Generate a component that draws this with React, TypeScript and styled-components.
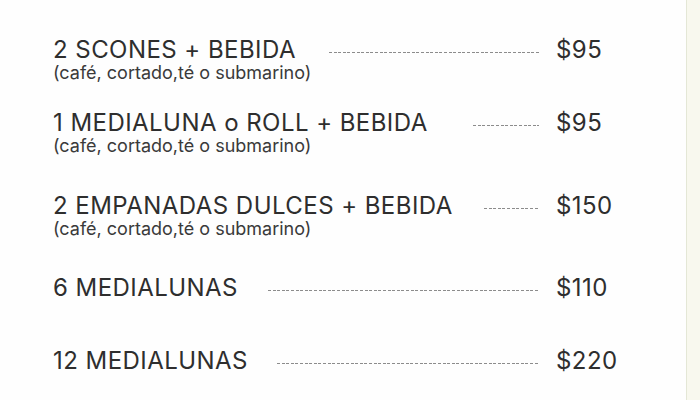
import React from "react";
import styled, { createGlobalStyle } from "styled-components";

const Global = createGlobalStyle`
  html, body { margin: 0; padding: 0; }
  body {
    background: #f8f8ee;
    font-family: Inter, "Liberation Sans", Arial, sans-serif;
    color: #2f2f2f;
  }
`;

const Page = styled.div`
  display: flex;
  height: 400px;
  overflow: hidden;
`;

const Panel = styled.main`
  width: 687px;
  background: #fefefe;
  border-right: 1px solid #e4e7d6;
  box-sizing: border-box;
  padding: 35px 50px 0 53px;
`;

const Item = styled.section<{ $gap: number }>`
  margin-top: ${(p) => p.$gap}px;
`;

const Line = styled.div`
  display: grid;
  grid-template-columns: auto 1fr 80px;
  align-items: center;
  height: 28px;
`;

const Title = styled.span`
  font-size: 24px;
  letter-spacing: 0.45px;
  font-weight: 400;
  white-space: nowrap;
  color: #2e2e2e;
`;

const Dots = styled.span<{ $l: number }>`
  height: 1px;
  margin: 6px 17px 0 ${(p) => p.$l}px;
  background-image: repeating-linear-gradient(
    to right,
    #8c8c8c 0 3px,
    transparent 3px 4.6px
  );
`;

const Price = styled.span`
  font-size: 24px;
  letter-spacing: 0.45px;
  color: #2e2e2e;
`;

const Note = styled.div`
  font-size: 18px;
  line-height: 20px;
  color: #3a3a3a;
`;

type Row = { title: string; price: string; note?: string; gap: number; dl: number };

const rows: Row[] = [
  { title: "2 SCONES + BEBIDA", price: "$95", note: "(café, cortado,té o submarino)", gap: 0, dl: 33 },
  { title: "1 MEDIALUNA o ROLL + BEBIDA", price: "$95", note: "(café, cortado,té o submarino)", gap: 25, dl: 45 },
  { title: "2 EMPANADAS DULCES + BEBIDA", price: "$150", note: "(café, cortado,té o submarino)", gap: 35, dl: 31 },
  { title: "6 MEDIALUNAS", price: "$110", gap: 34, dl: 30 },
  { title: "12 MEDIALUNAS", price: "$220", gap: 45, dl: 29 },
];

export default function App() {
  return (
    <>
      <Global />
      <Page>
        <Panel>
          {rows.map((r) => (
            <Item key={r.title} $gap={r.gap}>
              <Line>
                <Title>{r.title}</Title>
                <Dots $l={r.dl} />
                <Price>{r.price}</Price>
              </Line>
              {r.note && <Note>{r.note}</Note>}
            </Item>
          ))}
        </Panel>
      </Page>
    </>
  );
}
